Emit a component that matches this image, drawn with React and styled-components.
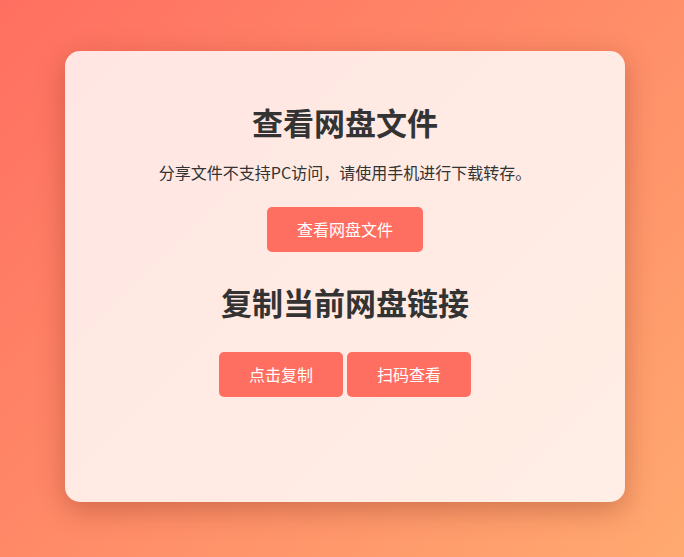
import React from "react";
import styled, { createGlobalStyle } from "styled-components";

const Global = createGlobalStyle`
  html, body { margin: 0; padding: 0; }
  body {
    font-family: "Noto Sans CJK SC", "Noto Sans", "Liberation Sans", sans-serif;
    background: linear-gradient(135deg, #ff6f61 0%, #ffa970 100%);
    min-height: 557px;
  }
`;

const Page = styled.div`
  min-height: 557px;
  box-sizing: border-box;
  padding: 51px 59px 55px 65px;
  display: flex;
  justify-content: center;
  align-items: flex-start;
`;

const Card = styled.div`
  width: 560px;
  height: 451px;
  box-sizing: border-box;
  padding: 51px 20px 0;
  background: rgba(255, 255, 255, 0.82);
  border-radius: 15px;
  box-shadow: 0 8px 28px rgba(120, 40, 20, 0.35);
  display: flex;
  flex-direction: column;
  align-items: center;
  text-align: center;
  color: #333;
`;

const Title = styled.h1`
  margin: ${(p) => p.$mt || 0}px 0 0;
  font-size: 31px;
  line-height: 40px;
  font-weight: 700;
  color: #333;
`;

const Text = styled.p`
  margin: 18px 0 0;
  font-size: 16px;
  line-height: 24px;
  color: #333;
`;

const Row = styled.div`
  display: flex;
  gap: 4px;
  justify-content: center;
  margin-top: ${(p) => p.$mt}px;
`;

const Button = styled.button`
  border: none;
  border-radius: 5px;
  background: #ff6f61;
  color: #fff;
  font-family: inherit;
  font-size: 16px;
  line-height: 21px;
  padding: 12px 30px;
  height: 45px;
  cursor: pointer;
`;

export default function App() {
  return (
    <>
      <Global />
      <Page>
        <Card>
          <Title>查看网盘文件</Title>
          <Text>分享文件不支持PC访问，请使用手机进行下载转存。</Text>
          <Row $mt={23}>
            <Button>查看网盘文件</Button>
          </Row>
          <Title $mt={30}>复制当前网盘链接</Title>
          <Row $mt={30}>
            <Button>点击复制</Button>
            <Button>扫码查看</Button>
          </Row>
        </Card>
      </Page>
    </>
  );
}
